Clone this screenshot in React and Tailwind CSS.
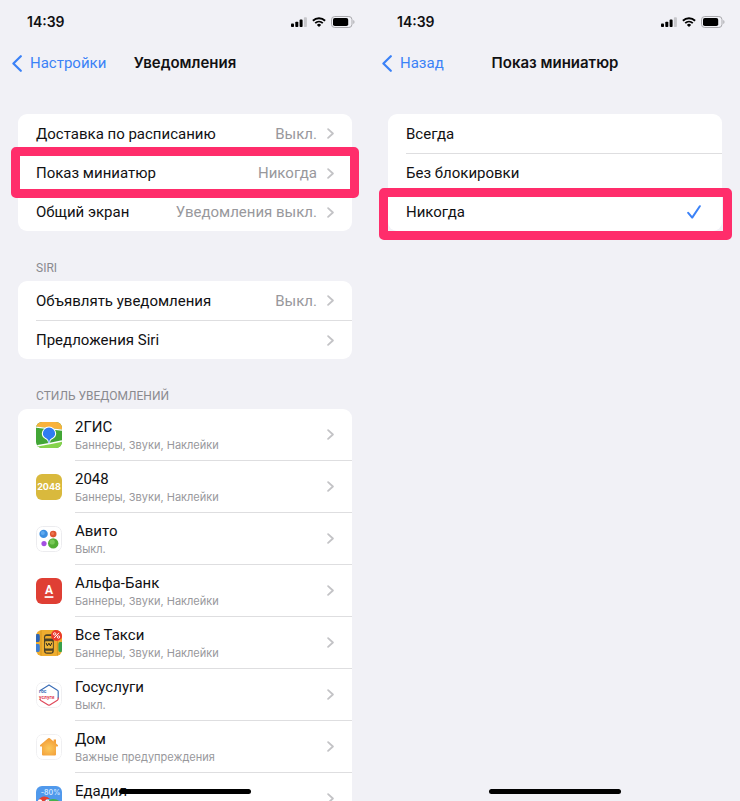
import { useState } from "react";

function StatusBar() {
  return (
    <div className="flex h-11 items-center justify-between pl-[27px] pr-[15px]">
      <time className="font-['Inter','Liberation_Sans',sans-serif] text-[14px] font-semibold leading-5">14:39</time>
      <div className="flex items-center gap-[5px]">
        <svg width="16" height="10" viewBox="0 0 16 10" aria-label="Сигнал">
          <rect x="0" y="6.6" width="3" height="3.4" rx="0.8" />
          <rect x="4.3" y="4.8" width="3" height="5.2" rx="0.8" />
          <rect x="8.6" y="2.6" width="3" height="7.4" rx="0.8" />
          <rect x="12.9" y="0.2" width="3" height="9.8" rx="0.8" fill="#c6c6ca" />
        </svg>
        <svg width="14" height="10" viewBox="0 0 14 10" fill="none" stroke="#000" aria-label="Wi-Fi">
          <path d="M0.9 3.7a8.8 8.8 0 0 1 12.2 0" strokeWidth="1.9" />
          <path d="M3.2 6.2a5.5 5.5 0 0 1 7.6 0" strokeWidth="1.8" />
          <path d="M7 10L4.9 7.9a3 3 0 0 1 4.2 0z" fill="#000" stroke="none" />
        </svg>
        <svg width="24" height="12" viewBox="0 0 24 12" aria-label="Батарея">
          <rect x="0.5" y="0.5" width="20.5" height="11" rx="3.2" fill="none" stroke="#a9a9ad" />
          <rect x="2" y="2" width="15.2" height="8" rx="1.8" />
          <path d="M22.3 4v4c1.6-.6 1.6-3.4 0-4z" fill="#a9a9ad" />
        </svg>
      </div>
    </div>
  );
}

function NavBar({ back, title }) {
  return (
    <header className="grid h-[38px] grid-cols-[1fr_auto_1fr] items-center px-3">
      <a href="#back" className="flex items-center gap-2 text-[15px] leading-5 text-[#3b82f7]">
        <svg width="10" height="17" viewBox="0 0 10 17" fill="none" stroke="currentColor" strokeWidth="2.2" strokeLinecap="round" strokeLinejoin="round">
          <path d="M8.8 1.2L1.4 8.5l7.4 7.3" />
        </svg>
        {back}
      </a>
      <h1 className="font-['Inter','Liberation_Sans',sans-serif] text-[15px] font-semibold leading-5">{title}</h1>
    </header>
  );
}

function Chevron() {
  return (
    <svg className="shrink-0" width="7" height="11" viewBox="0 0 7 11" fill="none" stroke="#c3c3c6" strokeWidth="1.8" strokeLinecap="round" strokeLinejoin="round">
      <path d="M1.1 1.1l4.8 4.4-4.8 4.4" />
    </svg>
  );
}

function Phone({ children }) {
  return (
    <section className="relative h-screen min-w-0 flex-1 overflow-hidden">
      {children}
      <div className="absolute bottom-[7px] left-1/2 h-[5px] w-[132px] -translate-x-1/2 rounded-full bg-black" />
    </section>
  );
}

function Card({ children }) {
  return <ul className="mx-[18px] rounded-[9px] bg-white">{children}</ul>;
}

function Row({ label, value, line, marked }) {
  return (
    <li className="relative pl-[18px]">
      <button
        type="button"
        className={`flex h-[39px] w-full items-center justify-between pr-[18px] text-left text-[15px] leading-5 ${line ? "border-t border-[#dedee0]" : ""}`}
      >
        <span>{label}</span>
        <span className="flex items-center gap-[10px] text-[#98989c]">
          {value}
          <Chevron />
        </span>
      </button>
      {marked && (
        <span className="pointer-events-none absolute -inset-x-[7px] -inset-y-[6px] z-10 rounded-[5px] border-[9px] border-[#ff2d6b]" />
      )}
    </li>
  );
}

function SectionTitle({ children }) {
  return <h2 className="px-9 pb-[5px] pt-[29px] text-[12px] leading-4 text-[#8a8a8f]">{children}</h2>;
}

function TwoGisIcon() {
  return (
    <svg width="26" height="26" viewBox="0 0 26 26">
      <rect width="26" height="26" fill="#42a636" />
      <path d="M0 0h26v7.6Q13 6 0 4.4z" fill="#f9b23c" />
      <path d="M0 5.2Q13 6.6 26 8.2" fill="none" stroke="#fff" strokeWidth="1.3" />
      <path d="M0 24.6Q13 21.6 26 19v7H0z" fill="#86d34c" />
      <path d="M0 24Q13 22 26 19" fill="none" stroke="#fff" strokeWidth="1.3" />
      <path d="M13 4.6a7.2 7.2 0 0 0-7.2 7c0 4.8 4.9 5.2 5.9 7.6l.5 2.8h1.6l.5-2.8c1-2.4 5.9-2.8 5.9-7.6a7.2 7.2 0 0 0-7.2-7z" fill="#fff" />
      <path d="M13 5.6a6.1 6.1 0 0 0-6.1 6c0 4.2 4.6 4.5 5.6 7.2l.2 2.4h.6l.2-2.4c1-2.7 5.6-3 5.6-7.2a6.1 6.1 0 0 0-6.1-6z" fill="#2f7cf2" />
    </svg>
  );
}

function Game2048Icon() {
  return (
    <svg width="26" height="26" viewBox="0 0 26 26">
      <rect width="26" height="26" fill="#d9b93d" />
      <text x="13" y="16.4" textAnchor="middle" fontSize="9" fontWeight="700" fill="#fff" fontFamily="Inter, sans-serif">2048</text>
    </svg>
  );
}

function AvitoIcon() {
  return (
    <svg width="26" height="26" viewBox="0 0 26 26">
      <rect x="0.5" y="0.5" width="25" height="25" rx="6" fill="#fff" stroke="#ececef" />
      <circle cx="7.6" cy="7.9" r="4.2" fill="#3d8fe0" />
      <circle cx="6.8" cy="6.9" r="2" fill="#5faaf0" />
      <circle cx="17.2" cy="8.1" r="3.3" fill="#dd5530" />
      <circle cx="16.6" cy="7.4" r="1.5" fill="#ec7650" />
      <circle cx="8" cy="17.6" r="2.6" fill="#a34fe0" />
      <circle cx="17.2" cy="17.4" r="5.2" fill="#53ae35" />
      <circle cx="16.2" cy="16" r="2.6" fill="#79c957" />
    </svg>
  );
}

function AlfaIcon() {
  return (
    <svg width="26" height="26" viewBox="0 0 26 26">
      <rect width="26" height="26" fill="#df3f34" />
      <text x="13" y="15.6" textAnchor="middle" fontSize="12" fontWeight="700" fill="#fff">А</text>
      <rect x="8.6" y="18.2" width="8.8" height="1.7" fill="#fff" />
    </svg>
  );
}

function TaxiIcon() {
  return (
    <svg width="26" height="26" viewBox="0 0 26 26">
      <rect width="26" height="26" fill="#efad2f" />
      <path d="M0 4h2.4q1.4 0 1.4 2v4q0 2-1.4 2H0z" fill="#2d66b8" />
      <path d="M0 14h2.4q1.4 0 1.4 2v4q0 2-1.4 2H0z" fill="#3d7fd6" />
      <path d="M26 12h-2q-1.6 0-1.6 2v6q0 2 1.6 2h2z" fill="#39a04b" />
      <path d="M5 0v26M21.4 0v26" stroke="#d08f1b" strokeWidth="0.8" />
      <rect x="8" y="4.2" width="9.8" height="19.6" rx="3" fill="#4a4126" />
      <path d="M9.6 6h6.6l.8 2.4H8.8z" fill="#efad2f" />
      <rect x="8.9" y="11.2" width="8" height="7.4" rx="1.2" fill="#efb638" />
      <path d="M10 12.8l1.4 3 1.5-2.6 1.5 2.6 1.4-3" fill="none" stroke="#26241d" strokeWidth="1" />
      <path d="M9.2 20.8h7.4l-.8 1.6h-5.8z" fill="#efad2f" />
      <circle cx="20.6" cy="5.4" r="5.6" fill="#ea3a2d" />
      <path d="M23 2.8l-4.8 5.2" stroke="#fff" strokeWidth="1" />
      <circle cx="18.7" cy="3.9" r="1.2" fill="none" stroke="#fff" strokeWidth="0.9" />
      <circle cx="22.5" cy="7" r="1.2" fill="none" stroke="#fff" strokeWidth="0.9" />
    </svg>
  );
}

function GosuslugiIcon() {
  return (
    <svg width="26" height="26" viewBox="0 0 26 26">
      <rect x="0.5" y="0.5" width="25" height="25" rx="6" fill="#fff" stroke="#f0f0f2" />
      <path d="M4.2 8.6l8-5.2q.8-.4 1.6 0l7.6 4.8q.8.4.8 1.4v7" fill="none" stroke="#3d6fb8" strokeWidth="1.2" />
      <path d="M22.2 15.5v1.3q0 .9-.8 1.4l-7.6 4.8q-.8.4-1.6 0l-7.4-4.6q-.8-.6-.8-1.4" fill="none" stroke="#e04a5c" strokeWidth="1.2" />
      <text x="3" y="11.2" fontSize="5" fontWeight="700" fill="#3d6fb8">гос</text>
      <text x="3" y="17" fontSize="5" fontWeight="700" fill="#e04a5c">услуги</text>
    </svg>
  );
}

function HomeIcon() {
  return (
    <svg width="26" height="26" viewBox="0 0 26 26">
      <defs>
        <radialGradient id="home-glow" cx="0.5" cy="0.6" r="0.6">
          <stop offset="0" stopColor="#fbc95c" />
          <stop offset="1" stopColor="#f29a35" />
        </radialGradient>
      </defs>
      <rect x="0.5" y="0.5" width="25" height="25" rx="6" fill="#fff" stroke="#f0f0f2" />
      <path d="M12.2 4.2q.8-.6 1.6 0l3.8 3.2V5.6h2.4v3.9l1.8 1.6q.7.8-.2 1.3H20v8q0 1-1 1H7q-1 0-1-1v-8H4.4q-.9-.5-.2-1.3z" fill="url(#home-glow)" />
    </svg>
  );
}

function EdadilIcon() {
  return (
    <svg width="26" height="26" viewBox="0 0 26 26">
      <rect width="26" height="26" fill="#5099ec" />
      <text x="14.5" y="9" textAnchor="middle" fontSize="7" fontWeight="600" fill="#cfe5ff" fontFamily="Inter, sans-serif">-80%</text>
      <path d="M8 26c-1-7 3-13 9-13 4 0 7 2 9 5v8z" fill="#45b24b" />
      <path d="M2 15c2-5 8-6 12-2-3 0-5 1-7 4z" fill="#e5402f" />
      <circle cx="4" cy="15.5" r="2.2" fill="#fff" />
      <circle cx="11.4" cy="15.6" r="2" fill="#fff" />
      <circle cx="11.8" cy="15.8" r="1" fill="#111" />
    </svg>
  );
}

const apps = [
  { name: "2ГИС", note: "Баннеры, Звуки, Наклейки", Icon: TwoGisIcon },
  { name: "2048", note: "Баннеры, Звуки, Наклейки", Icon: Game2048Icon },
  { name: "Авито", note: "Выкл.", Icon: AvitoIcon },
  { name: "Альфа-Банк", note: "Баннеры, Звуки, Наклейки", Icon: AlfaIcon },
  { name: "Все Такси", note: "Баннеры, Звуки, Наклейки", Icon: TaxiIcon },
  { name: "Госуслуги", note: "Выкл.", Icon: GosuslugiIcon },
  { name: "Дом", note: "Важные предупреждения", Icon: HomeIcon },
  { name: "Едадил", note: "", Icon: EdadilIcon },
];

function AppRow({ name, note, Icon }) {
  return (
    <li>
      <button type="button" className="flex h-[52px] w-full items-center gap-[13px] pl-[18px] text-left">
        <span className="shrink-0 overflow-hidden rounded-md">
          <Icon />
        </span>
        <span className="flex h-full flex-1 items-center justify-between border-b border-[#dedee0] pr-[18px]">
          <span className="flex flex-col">
            <span className="text-[15px] leading-5">{name}</span>
            <span className="h-4 font-['Inter','Liberation_Sans',sans-serif] text-[11px] leading-4 text-[#98989c]">{note}</span>
          </span>
          <Chevron />
        </span>
      </button>
    </li>
  );
}

const options = ["Всегда", "Без блокировки", "Никогда"];

export default function App() {
  const [choice, setChoice] = useState("Никогда");

  return (
    <main className="flex min-h-screen bg-[#f1f1f6] font-['Roboto','Liberation_Sans',sans-serif] text-[#111113]">
      <Phone>
        <StatusBar />
        <NavBar back="Настройки" title="Уведомления" />
        <div className="pt-8">
          <Card>
            <Row label="Доставка по расписанию" value="Выкл." />
            <Row label="Показ миниатюр" value="Никогда" line marked />
            <Row label="Общий экран" value="Уведомления выкл." line />
          </Card>
          <SectionTitle>SIRI</SectionTitle>
          <Card>
            <Row label="Объявлять уведомления" value="Выкл." />
            <Row label="Предложения Siri" line />
          </Card>
          <SectionTitle>СТИЛЬ УВЕДОМЛЕНИЙ</SectionTitle>
          <Card>
            {apps.map((app) => (
              <AppRow key={app.name} {...app} />
            ))}
          </Card>
        </div>
      </Phone>
      <Phone>
        <StatusBar />
        <NavBar back="Назад" title="Показ миниатюр" />
        <div className="pt-8">
          <Card>
            {options.map((option, i) => (
              <li key={option} className="relative pl-[18px]">
                <label className={`flex h-[39px] items-center justify-between pr-[21px] text-[15px] leading-5 ${i > 0 ? "border-t border-[#dedee0]" : ""}`}>
                  {option}
                  <input
                    type="radio"
                    name="preview"
                    className="sr-only"
                    checked={choice === option}
                    onChange={() => setChoice(option)}
                  />
                  {choice === option && (
                    <svg width="14" height="14" viewBox="0 0 14 14" fill="none" stroke="#3b82f7" strokeWidth="2" strokeLinecap="round" strokeLinejoin="round">
                      <path d="M1.2 7.8l4 4.8L12.8 1.2" />
                    </svg>
                  )}
                </label>
                {option === "Никогда" && (
                  <span className="pointer-events-none absolute -bottom-[9px] -left-[9px] -right-[10px] -top-1 z-10 rounded-[5px] border-[9px] border-[#ff2d6b]" />
                )}
              </li>
            ))}
          </Card>
        </div>
      </Phone>
    </main>
  );
}
